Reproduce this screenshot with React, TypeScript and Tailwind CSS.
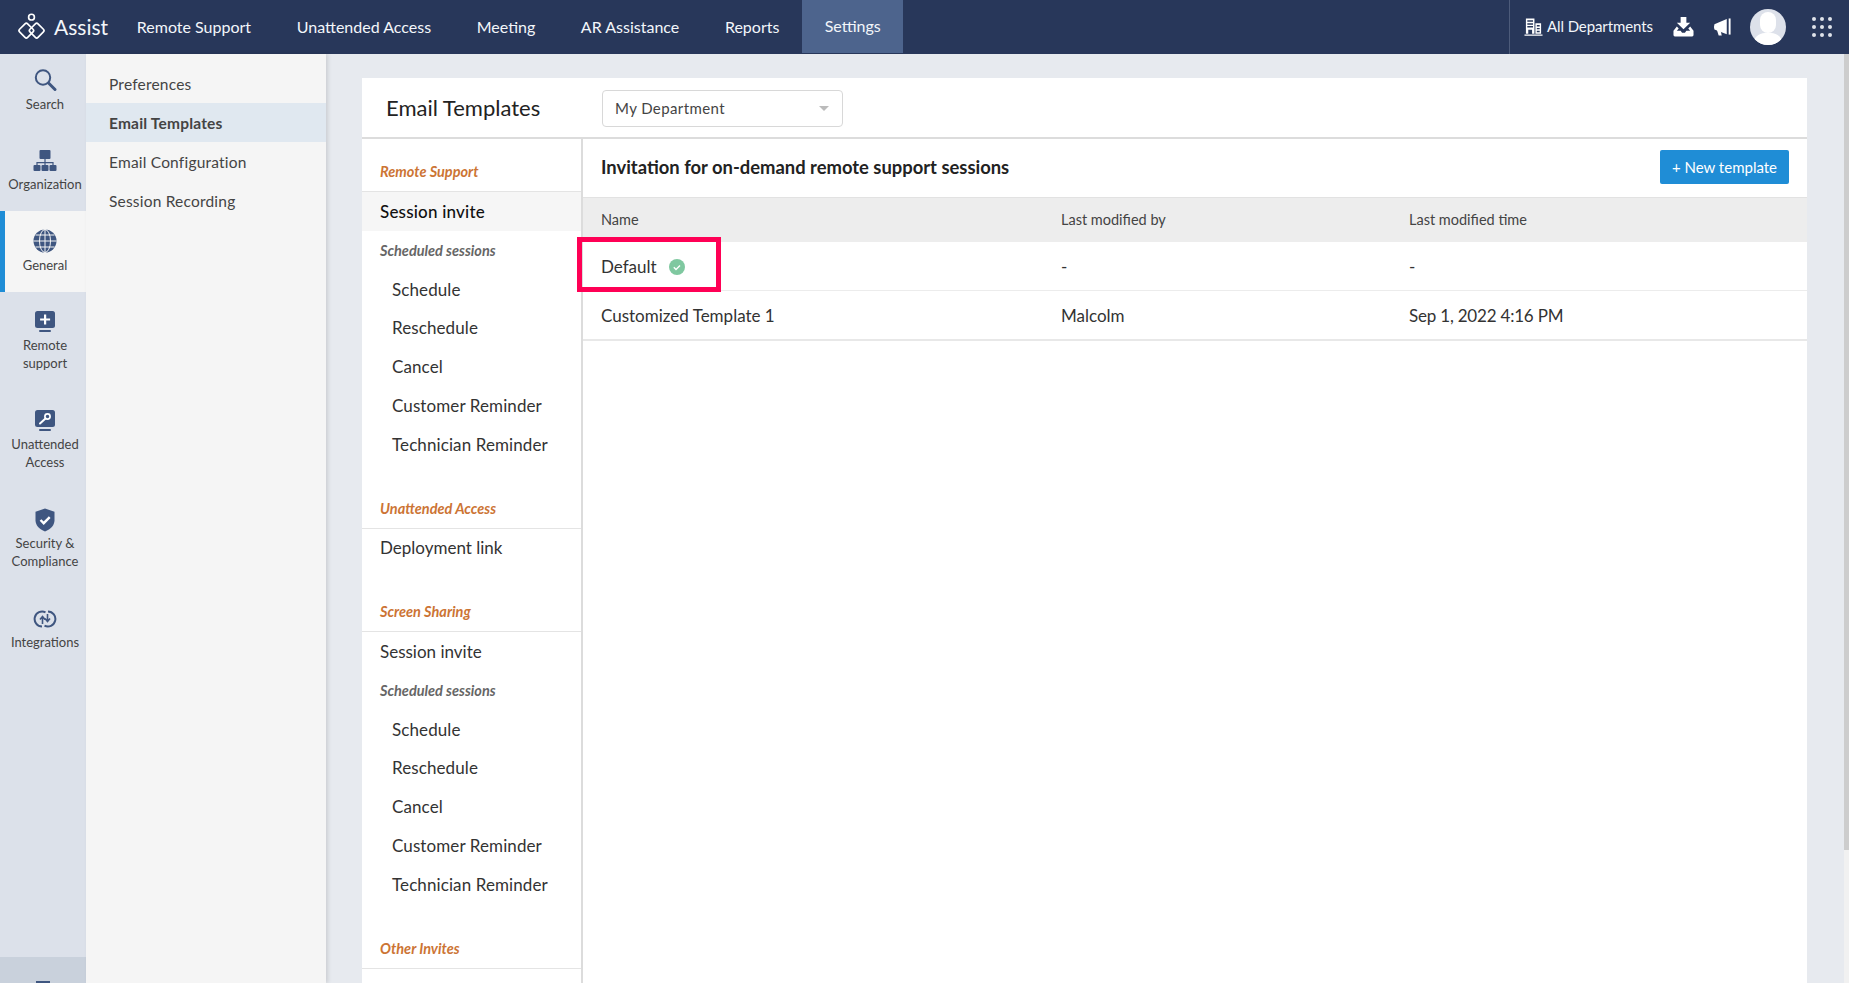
import React from 'react';

const NAV = ['Remote Support', 'Unattended Access', 'Meeting', 'AR Assistance', 'Reports'];
const SUB_NAV = ['Preferences', 'Email Templates', 'Email Configuration', 'Session Recording'];
const SCHEDULED = ['Schedule', 'Reschedule', 'Cancel', 'Customer Reminder', 'Technician Reminder'];

const SearchIcon = () => (
  <svg viewBox="0 0 24 24" className="h-6 w-6" fill="none" stroke="#3f5680">
    <circle cx="10" cy="9.5" r="7.2" strokeWidth="2" />
    <path d="M15.5 15l6.5 6.5" strokeWidth="3" strokeLinecap="round" />
  </svg>
);

const OrgIcon = () => (
  <svg viewBox="0 0 24 24" className="h-6 w-6" fill="#3f5680">
    <rect x="6.5" y="1" width="11" height="9" rx="1" />
    <path d="M11.4 10h1.2v3h8v3h-1.2v-1.8h-6.8V16h-1.2v-1.8H4.6V16H3.4v-3h8z" />
    <rect x="0.5" y="16" width="7" height="6" rx="1" />
    <rect x="8.5" y="16" width="7" height="6" rx="1" />
    <rect x="16.5" y="16" width="7" height="6" rx="1" />
  </svg>
);

const GlobeIcon = () => (
  <svg viewBox="0 0 24 24" className="h-6 w-6">
    <circle cx="12" cy="12" r="11.5" fill="#3f5680" />
    <g fill="none" stroke="#f5f5f5" strokeWidth="1">
      <ellipse cx="12" cy="12" rx="5.5" ry="11.5" />
      <path d="M12 0v24M0.5 12h23M2.5 6h19M2.5 18h19" />
    </g>
  </svg>
);

const RemoteIcon = () => (
  <svg viewBox="0 0 24 24" className="h-6 w-6" fill="#3f5680">
    <rect x="2" y="1" width="20" height="17" rx="2.5" />
    <rect x="6" y="20" width="12" height="2" rx="1" />
    <path d="M11 4.5h2.2v3.9h3.9v2.2h-3.9v3.9H11v-3.9H7.1V8.4H11z" fill="#fff" />
  </svg>
);

const KeyIcon = () => (
  <svg viewBox="0 0 24 24" className="h-6 w-6" fill="#3f5680">
    <rect x="2" y="1" width="20" height="17" rx="2.5" />
    <rect x="6" y="20" width="12" height="2" rx="1" />
    <circle cx="14.5" cy="7.5" r="2.6" fill="none" stroke="#fff" strokeWidth="1.7" />
    <path d="M12.5 9.5L7 14.5" stroke="#fff" strokeWidth="2" strokeLinecap="round" />
  </svg>
);

const ShieldIcon = () => (
  <svg viewBox="0 0 24 24" className="h-6 w-6">
    <path d="M12 0.5l9.5 3.3v8.4c0 5-3.8 9-9.5 11.3-5.7-2.3-9.5-6.3-9.5-11.3V3.8z" fill="#3f5680" />
    <path d="M7.5 12l3.2 3.2 6-6" fill="none" stroke="#fff" strokeWidth="2.4" />
  </svg>
);

const IntegrationIcon = () => (
  <svg viewBox="0 0 24 24" className="h-6 w-6" fill="none" stroke="#3f5680" strokeWidth="2">
    <path d="M12.5 5.3A7.5 7.5 0 1 0 9 19.5" />
    <path d="M11.5 18.7A7.5 7.5 0 1 0 15 4.5" />
    <path d="M9.5 17v-7M7 12.5l2.5-3 2.5 3M14.5 7v7M12 11.5l2.5 3 2.5-3" strokeWidth="1.6" />
  </svg>
);

const SIDE_ITEMS = [
  { icon: <SearchIcon />, lines: ['Search'], box: 'h-[76px] pt-[14px] pl-[4px]', gap: 'mt-[3px]' },
  { icon: <OrgIcon />, lines: ['Organization'], box: 'h-[81px] pt-[19px] pl-[4px]', gap: 'mt-[2px]' },
  { icon: <GlobeIcon />, lines: ['General'], box: 'h-[81px] pt-[18px] pr-[1px] border-l-[5px] border-[#1f8dd6] bg-[#f5f5f5]', gap: 'mt-[3px]' },
  { icon: <RemoteIcon />, lines: ['Remote', 'support'], box: 'h-[99px] pt-[18px] pl-[4px]', gap: 'mt-[2px]' },
  { icon: <KeyIcon />, lines: ['Unattended', 'Access'], box: 'h-[100px] pt-[18px] pl-[4px]', gap: 'mt-[2px]' },
  { icon: <ShieldIcon />, lines: ['Security &', 'Compliance'], box: 'h-[99px] pt-[17px] pl-[4px]', gap: 'mt-[2px]' },
  { icon: <IntegrationIcon />, lines: ['Integrations'], box: 'h-[81px] pt-[17px] pl-[4px]', gap: 'mt-[2px]' },
];

const Section = ({ title, box }: { title: string; box: string }) => (
  <div className={`${box} flex items-end border-b border-[#e4e4e4] pb-[10px] pl-[18px] text-[14.5px] font-bold italic leading-[18px] text-[#cc7434]`}>
    {title}
  </div>
);

const Sessions = () => (
  <>
    <div className="flex h-[39px] items-center pl-[18px] text-[14.5px] font-bold italic text-[#666]">Scheduled sessions</div>
    {SCHEDULED.map((s) => (
      <div key={s} className="flex h-[38.8px] items-center pl-[30px] text-[17px] tracking-[0.1px] text-[#333]">{s}</div>
    ))}
  </>
);

export default function App() {
  return (
    <div className="flex h-screen w-full flex-col overflow-hidden bg-[#e7eaef] font-['Lato',sans-serif] text-[#333]">
      {/* Header */}
      <header className="flex h-[54px] shrink-0 items-stretch bg-[#28375a] text-[16px] text-[#f3f6fa]">
        <div className="flex w-[114px] items-center pl-[17px]">
          <svg viewBox="0 0 28 28" className="h-[29px] w-[29px] shrink-0" fill="none" stroke="#fff" strokeWidth="1.6">
            <circle cx="14" cy="4" r="2.8" />
            <rect x="-5.5" y="-5.5" width="11" height="11" rx="1.8" transform="translate(9 17) rotate(45)" />
            <rect x="-5.5" y="-5.5" width="11" height="11" rx="1.8" transform="translate(19 17) rotate(45)" />
          </svg>
          <span className="ml-[8px] text-[21px]">Assist</span>
        </div>
        {NAV.map((n) => (
          <div key={n} className="flex items-center px-[22.8px] pb-[1px]">{n}</div>
        ))}
        <div className="mb-[1px] flex items-center bg-[#4d648d] px-[22.5px] pb-[1px]">Settings</div>
        <div className="flex-1" />
        <div className="flex w-[340px] items-center border-l border-[#4d5b7a] pb-[1px] pl-[14px]">
          <svg viewBox="0 0 20 20" className="h-[20px] w-[19px]" fill="#fff">
            <path d="M2 1h9v16h-2.5v-4h-4v4H2zM3.5 3v1.5h6V3zm0 3v1.5h6V6zm0 3v1.5h6V9zM12 6h6v11h-6zm1.5 2v1.4h3V8zm0 3v1.4h3V11zm0 3v1.4h3V14zM0.5 18h19v1.2H.5z" fillRule="evenodd" />
          </svg>
          <span className="ml-[4px] text-[15px] tracking-[-0.1px]">All Departments</span>
          <svg viewBox="0 0 22 22" className="ml-[20px] h-[21px] w-[21px]" fill="#fff">
            <path d="M8 1h6v6h4l-7 7-7-7h4z" />
            <path d="M4 11L0.5 15.5V20a1.5 1.5 0 0 0 1.5 1.5h18a1.5 1.5 0 0 0 1.5-1.5v-4.5L18 11l-2 2 2 2.5h-4l-1.5 2h-3L8 15.5H4L6 13z" />
          </svg>
          <svg viewBox="0 0 20 20" className="ml-[19px] h-[20px] w-[19px]" fill="#fff">
            <path d="M1.5 7L14.5 1.5V17.5L1.5 12.5Q0.5 10 1.5 7z" />
            <path d="M16.5 1h2v17h-2z" />
            <path d="M4 13l4.2 1.6 1 4.4H6z" />
          </svg>
          <div className="relative ml-[18px] h-9 w-9 overflow-hidden rounded-full bg-[#dde1ea]">
            <div className="absolute left-[10px] top-[3px] h-[21px] w-[16px] rounded-full bg-white" />
            <div className="absolute left-[3px] top-[24px] h-[16px] w-[30px] rounded-t-[12px] bg-white" />
          </div>
          <div className="ml-[26px] grid grid-cols-3 gap-x-[4px] gap-y-[4px]">
            {Array.from({ length: 9 }).map((_, i) => (
              <span key={i} className="h-[4px] w-[4px] rounded-full bg-[#dfe3ea]" />
            ))}
          </div>
        </div>
      </header>

      <div className="flex min-h-0 flex-1">
        {/* Icon sidebar */}
        <aside className="flex w-[86px] shrink-0 flex-col bg-[#dce1ea] text-[13px] leading-[18px] text-[#444]">
          {SIDE_ITEMS.map((it) => (
            <div key={it.lines[0]} className={`${it.box} flex shrink-0 flex-col items-center`}>
              {it.icon}
              <div className={`${it.gap} text-center`}>
                {it.lines.map((l) => (
                  <div key={l}>{l}</div>
                ))}
              </div>
            </div>
          ))}
          <div className="flex-1" />
          <div className="flex h-[26px] shrink-0 justify-center bg-[#c9d1dc]">
            <div className="mt-[24px] h-[2px] w-[14px] bg-[#3f5680]" />
          </div>
        </aside>

        {/* Settings menu */}
        <nav className="z-10 w-[240px] shrink-0 bg-[#f5f5f5] pt-[10px] text-[15.5px] tracking-[0.2px] text-[#444] shadow-[2px_0_4px_rgba(0,0,0,0.12)]">
          {SUB_NAV.map((s) => (
            <div
              key={s}
              className={`flex h-[39px] items-center pl-[23px] pt-[2px] ${s === 'Email Templates' ? 'bg-[#e0e8f0] font-bold' : ''}`}
            >
              {s}
            </div>
          ))}
        </nav>

        {/* Main */}
        <main className="min-w-0 flex-1 pl-[36px] pr-[37px] pt-[24px]">
          <div className="flex h-full flex-col bg-white">
            <div className="flex h-[61px] shrink-0 items-center border-b-2 border-[#dcdcdc] pl-[24px]">
              <h1 className="mb-[1px] w-[216px] text-[22px] text-[#222]">Email Templates</h1>
              <div className="mt-[2px] flex h-[37px] w-[241px] items-center justify-between rounded-[4px] border border-[#d8d8d8] pl-[12px] pr-[13px] text-[15px] tracking-[0.4px] text-[#444]">
                My Department
                <span className="h-0 w-0 border-x-[5px] border-t-[5px] border-x-transparent border-t-[#bbb]" />
              </div>
            </div>

            <div className="flex min-h-0 flex-1">
              {/* Template list */}
              <div className="w-[221px] shrink-0 overflow-hidden border-r-2 border-[#dcdcdc]">
                <Section title="Remote Support" box="h-[53px]" />
                <div className="flex h-[39px] items-center bg-[#f6f6f6] pl-[18px] text-[17px] font-medium tracking-[0.2px] text-[#111]">Session invite</div>
                <Sessions />
                <Section title="Unattended Access" box="h-[65px]" />
                <div className="flex h-[38px] items-center pl-[18px] text-[17px] text-[#333]">Deployment link</div>
                <Section title="Screen Sharing" box="h-[65px]" />
                <div className="flex h-[39px] items-center pl-[18px] text-[17px] text-[#333]">Session invite</div>
                <Sessions />
                <Section title="Other Invites" box="h-[65px]" />
              </div>

              {/* Template table */}
              <div className="relative min-w-0 flex-1">
                <div className="flex h-[58px] items-center justify-between pl-[18px] pr-[18px]">
                  <h2 className="text-[18.4px] font-bold text-[#222]">Invitation for on-demand remote support sessions</h2>
                  <button className="mb-[2px] flex h-[34px] w-[129px] items-center justify-center rounded-[2px] bg-[#1f8dd6] text-[15px] text-white">
                    + New template
                  </button>
                </div>
                <div className="grid h-[45px] grid-cols-[460px_348px_1fr] items-center border-t border-[#e2e2e2] bg-[#ededed] pl-[18px] text-[14.5px] text-[#444]">
                  <span>Name</span>
                  <span>Last modified by</span>
                  <span>Last modified time</span>
                </div>
                <div className="grid h-[49px] grid-cols-[460px_348px_1fr] items-center border-b border-[#ececec] pl-[18px] pt-[2px] text-[17px] text-[#333]">
                  <span className="flex items-center">
                    Default
                    <svg viewBox="0 0 16 16" className="ml-[12px] h-4 w-4">
                      <circle cx="8" cy="8" r="8" fill="#7fc8a0" />
                      <path d="M4.8 8.2l2.2 2.2 4-4" fill="none" stroke="#fff" strokeWidth="1.4" />
                    </svg>
                  </span>
                  <span>-</span>
                  <span>-</span>
                </div>
                <div className="grid h-[50px] grid-cols-[460px_348px_1fr] items-center border-b-2 border-[#e8e8e8] pl-[18px] pt-[2px] text-[17px] text-[#333]">
                  <span>Customized Template 1</span>
                  <span>Malcolm</span>
                  <span className="tracking-[-0.2px]">Sep 1, 2022 4:16 PM</span>
                </div>
                {/* Highlight annotation */}
                <div className="absolute left-[-6px] top-[98px] h-[55px] w-[144px] border-[5px] border-[#ff0055]" />
              </div>
            </div>
          </div>
        </main>

        {/* Scrollbar */}
        <div className="w-[5px] shrink-0 bg-[#f1f1f1]">
          <div className="h-[796px] bg-[#cdcdcd]" />
        </div>
      </div>
    </div>
  );
}
